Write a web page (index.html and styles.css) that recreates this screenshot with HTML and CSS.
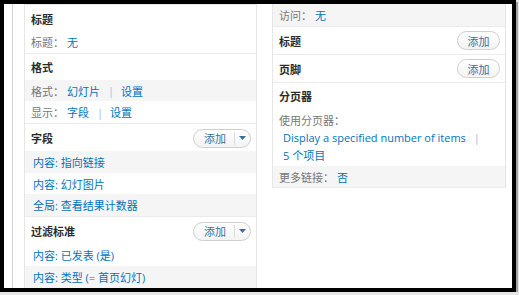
FILE: index.html
```html
<!DOCTYPE html>
<html lang="zh-CN">

<head>
    <meta charset="UTF-8">
    <meta name="viewport" content="width=device-width, initial-scale=1.0">
    <title>视图显示设置</title>
    <link rel="stylesheet" href="styles.css">
</head>

<body>
    <div class="frame">
        <div class="page">
            <div class="column column-left">
                <div class="bucket">
                    <div class="bucket-heading">标题</div>
                    <div class="setting">
                        <span class="label">标题：</span><a class="value" href="#">无</a>
                    </div>
                </div>

                <div class="bucket">
                    <div class="bucket-heading">格式</div>
                    <div class="setting shaded">
                        <span class="label">格式：</span><a class="value" href="#">幻灯片</a><span class="sep">|</span><a class="value-plain" href="#">设置</a>
                    </div>
                    <div class="setting">
                        <span class="label">显示：</span><a class="value" href="#">字段</a><span class="sep">|</span><a class="value-plain" href="#">设置</a>
                    </div>
                </div>

                <div class="bucket">
                    <div class="bucket-heading has-button">
                        字段
                        <div class="dropbutton">
                            <span class="dropbutton-action">添加</span>
                            <span class="dropbutton-toggle">
                                <svg width="7" height="4" viewBox="0 0 7 4"><path d="M0 0h7L3.5 4z" fill="#3a6f9e"/></svg>
                            </span>
                        </div>
                    </div>
                    <a class="setting setting-link shaded" href="#">内容: 指向链接</a>
                    <a class="setting setting-link" href="#">内容: 幻灯图片</a>
                    <a class="setting setting-link shaded" href="#">全局: 查看结果计数器</a>
                </div>

                <div class="bucket">
                    <div class="bucket-heading has-button">
                        过滤标准
                        <div class="dropbutton">
                            <span class="dropbutton-action">添加</span>
                            <span class="dropbutton-toggle">
                                <svg width="7" height="4" viewBox="0 0 7 4"><path d="M0 0h7L3.5 4z" fill="#3a6f9e"/></svg>
                            </span>
                        </div>
                    </div>
                    <a class="setting setting-link" href="#">内容: 已发表 (是)</a>
                    <a class="setting setting-link shaded" href="#">内容: 类型 (= 首页幻灯)</a>
                </div>
            </div>

            <div class="column column-right">
                <div class="bucket">
                    <div class="setting shaded">
                        <span class="label">访问：</span><a class="value" href="#">无</a>
                    </div>
                </div>

                <div class="bucket">
                    <div class="bucket-heading has-button">
                        标题
                        <span class="button">添加</span>
                    </div>
                </div>

                <div class="bucket">
                    <div class="bucket-heading has-button">
                        页脚
                        <span class="button">添加</span>
                    </div>
                </div>

                <div class="bucket">
                    <div class="bucket-heading">分页器</div>
                    <div class="setting setting-multi">
                        <span class="label">使用分页器：</span>
                        <a class="line" href="#">Display a specified number of items<span class="sep">|</span></a>
                        <a class="line" href="#">5 个项目</a>
                    </div>
                    <div class="setting shaded">
                        <span class="label">更多链接：</span><a class="value" href="#">否</a>
                    </div>
                </div>
            </div>
        </div>
    </div>
</body>

</html>
```

FILE: styles.css
```css
* {
    box-sizing: border-box;
}

body {
    margin: 0;
    background-color: #e6e6e6;
    font-family: "Open Sans", "Noto Sans CJK SC", sans-serif;
    font-size: 11px;
    color: #333;
}

a {
    color: #0074bd;
    text-decoration: none;
}

.frame {
    width: 516px;
    height: 292px;
    border: 4px solid #000;
    background-color: #fff;
    overflow: hidden;
    box-shadow: 2px 2px 0 #a3a3a3;
}

.page {
    height: 100%;
    margin-left: 8px;
    padding-left: 11px;
    border-left: 1px solid #d6d6d6;
    display: flex;
    align-items: flex-start;
    gap: 15px;
}

.column {
    border: 1px solid #e6e6e6;
    border-bottom: none;
}

.column-left {
    width: 233px;
}

.column-right {
    width: 234px;
    border-top: none;
}

.bucket {
    border-bottom: 1px solid #ebebeb;
}

.bucket-heading {
    height: 26px;
    padding: 1px 5px 0 6px;
    display: flex;
    align-items: center;
    justify-content: space-between;
    font-weight: bold;
    color: #2b2b2b;
}

.bucket-heading.has-button {
    height: 27px;
}

.setting {
    height: 21.7px;
    padding: 0 6px;
    display: flex;
    align-items: center;
    color: #777;
}

.setting.shaded {
    background-color: #f5f5f5;
}

.setting-link {
    padding-left: 8px;
    color: #0074bd;
}

.setting-multi {
    height: 57px;
    padding-top: 3px;
    flex-direction: column;
    align-items: flex-start;
    line-height: 17.5px;
}

.setting-multi .line {
    padding-left: 4px;
}

.label {
    margin-right: 3px;
}

.sep {
    margin: 0 7px 0 8px;
    color: #9cc0dc;
}

.dropbutton {
    height: 19px;
    display: flex;
    align-items: center;
    border: 1px solid #cfcfcf;
    border-radius: 10px;
    background: linear-gradient(#fff, #f3f3f3);
    font-weight: normal;
}

.dropbutton-action {
    width: 40px;
    text-align: center;
    color: #3d6f9c;
    padding-left: 2px;
}

.dropbutton-toggle {
    width: 16px;
    height: 13px;
    border-left: 1px solid #dcdcdc;
    display: flex;
    align-items: center;
    justify-content: center;
}

.button {
    width: 43px;
    height: 19px;
    display: flex;
    align-items: center;
    justify-content: center;
    border: 1px solid #cfcfcf;
    border-radius: 10px;
    background: linear-gradient(#fff, #f3f3f3);
    font-weight: normal;
    color: #3d6f9c;
}
```
